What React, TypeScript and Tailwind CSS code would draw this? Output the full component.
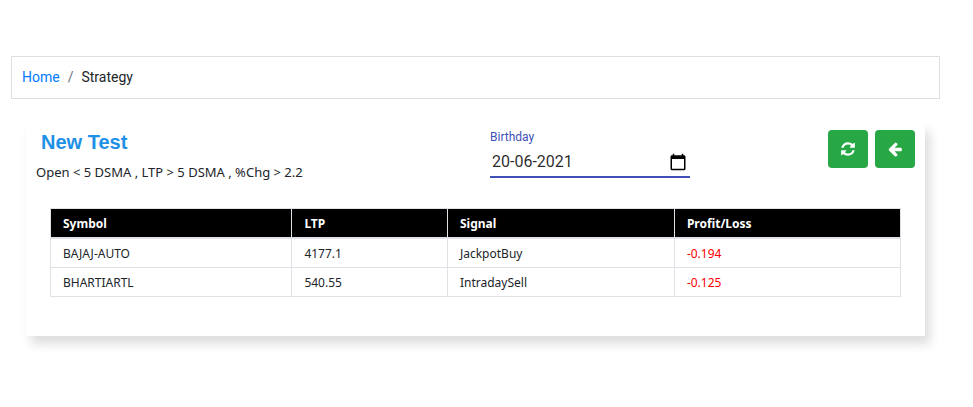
const rows = [
    { symbol: 'BAJAJ-AUTO', ltp: '4177.1', signal: 'JackpotBuy', profit: '-0.194' },
    { symbol: 'BHARTIARTL', ltp: '540.55', signal: 'IntradaySell', profit: '-0.125' },
];

const columns = [
    { title: 'Symbol', width: 'w-[28.4%]' },
    { title: 'LTP', width: 'w-[18.3%]' },
    { title: 'Signal', width: 'w-[26.7%]' },
    { title: 'Profit/Loss', width: 'w-[26.6%]' },
];

const cell = 'border border-[#dee2e6] px-3 pt-[5px] pb-[3px]';

const RefreshIcon = () => (
    <svg viewBox="0 0 1792 1792" className="w-4 h-4" fill="currentColor" aria-hidden="true">
        <path d="M1639 1056q0 5-1 7-64 268-268 434.5t-478 166.5q-146 0-282.5-55t-243.5-157l-129 129q-19 19-45 19t-45-19-19-45v-448q0-26 19-45t45-19h448q26 0 45 19t19 45-19 45l-137 137q71 66 161 102t187 36q134 0 250-65t186-179q11-17 53-117 8-23 30-23h192q13 0 22.5 9.5t9.5 22.5zm25-800v448q0 26-19 45t-45 19h-448q-26 0-45-19t-19-45 19-45l138-138q-148-137-349-137-134 0-250 65t-186 179q-11 17-53 117-8 23-30 23h-199q-13 0-22.5-9.5t-9.5-22.5v-7q65-268 270-434.5t480-166.5q146 0 284 55.5t245 156.5l130-129q19-19 45-19t45 19 19 45z" />
    </svg>
);

const BackIcon = () => (
    <svg viewBox="0 0 1792 1792" className="w-4 h-4" fill="currentColor" aria-hidden="true">
        <path d="M1664 896v128q0 53-32.5 90.5t-84.5 37.5h-704l293 294q38 36 38 90t-38 90l-75 76q-37 37-90 37-52 0-91-37l-651-652q-37-37-37-90 0-52 37-91l651-650q38-38 91-38 52 0 90 38l75 74q38 38 38 91t-38 91l-293 293h704q52 0 84.5 37.5t32.5 90.5z" />
    </svg>
);

const CalendarIcon = () => (
    <svg viewBox="0 0 24 24" className="w-[18px] h-[18px]" fill="currentColor" aria-hidden="true">
        <path d="M20 3h-1V1h-2v2H7V1H5v2H4c-1.1 0-2 .9-2 2v16c0 1.1.9 2 2 2h16c1.1 0 2-.9 2-2V5c0-1.1-.9-2-2-2zm0 18H4V8h16v13z" />
    </svg>
);

const DateField = () => (
    <div className="w-[200px] font-[Roboto,sans-serif]">
        <label htmlFor="birthday" className="block text-xs leading-[14px] text-[#3f51b5]">Birthday</label>
        <div className="flex items-center h-[34px] pt-[3px] pr-[3px] border-b-2 border-[#3f51b5]">
            <input
                id="birthday"
                type="text"
                defaultValue="20-06-2021"
                className="min-w-0 flex-1 pl-0.5 text-base text-black/85 outline-none"
            />
            <button type="button" aria-label="Pick a date" className="text-black">
                <CalendarIcon />
            </button>
        </div>
    </div>
);

const SignalTable = () => (
    <table className="w-full table-fixed border-collapse text-left text-xs leading-5 text-[#212529]">
        <thead>
            <tr className="bg-black text-white">
                {columns.map((column) => (
                    <th
                        key={column.title}
                        className={`${column.width} border border-b-2 border-[#dee2e6] px-3 pt-[5px] pb-[3px] font-bold`}
                    >
                        {column.title}
                    </th>
                ))}
            </tr>
        </thead>
        <tbody>
            {rows.map((row) => (
                <tr key={row.symbol}>
                    <td className={cell}>{row.symbol}</td>
                    <td className={cell}>{row.ltp}</td>
                    <td className={cell}>{row.signal}</td>
                    <td className={`${cell} text-[#ff0000]`}>{row.profit}</td>
                </tr>
            ))}
        </tbody>
    </table>
);

const App = () => {
    return (
        <main className="pt-14 pb-12 pl-[11px] pr-[33px] bg-white font-['Noto_Sans','Open_Sans',sans-serif]">
            <nav aria-label="Breadcrumb" className="border border-[#dfdfdf] px-[10px] py-[10px]">
                <ol className="flex gap-2 text-sm leading-[21px] text-[#212529] font-[Roboto,sans-serif]">
                    <li><a href="#" className="text-[#007bff]">Home</a></li>
                    <li aria-hidden="true" className="text-[#6c757d]">/</li>
                    <li>Strategy</li>
                </ol>
            </nav>

            <section className="mt-6 mx-[15px] px-[10px] pt-[7px] pb-[39px] bg-white shadow-[5px_8px_10px_#dddddd]">
                <div className="grid grid-cols-[454fr_425fr]">
                    <div>
                        <h1 className="pl-[5px] text-xl leading-6 font-bold text-[#1e90e6] font-['Liberation_Sans',Arial,sans-serif]">New Test</h1>
                        <p className="mt-2 text-[13px] leading-5 text-[#212529]">Open &lt; 5 DSMA , LTP &gt; 5 DSMA , %Chg &gt; 2.2</p>
                    </div>
                    <div className="flex items-start justify-between">
                        <DateField />
                        <div className="flex gap-[7px]">
                            <button type="button" aria-label="Refresh" className="flex items-center justify-center w-10 h-[38px] rounded bg-[#28a745] text-white">
                                <RefreshIcon />
                            </button>
                            <button type="button" aria-label="Back" className="flex items-center justify-center w-10 h-[38px] rounded bg-[#28a745] text-white">
                                <BackIcon />
                            </button>
                        </div>
                    </div>
                </div>
                <div className="mt-[26px] px-[14px]">
                    <SignalTable />
                </div>
            </section>
        </main>
    );
};

export default App;
